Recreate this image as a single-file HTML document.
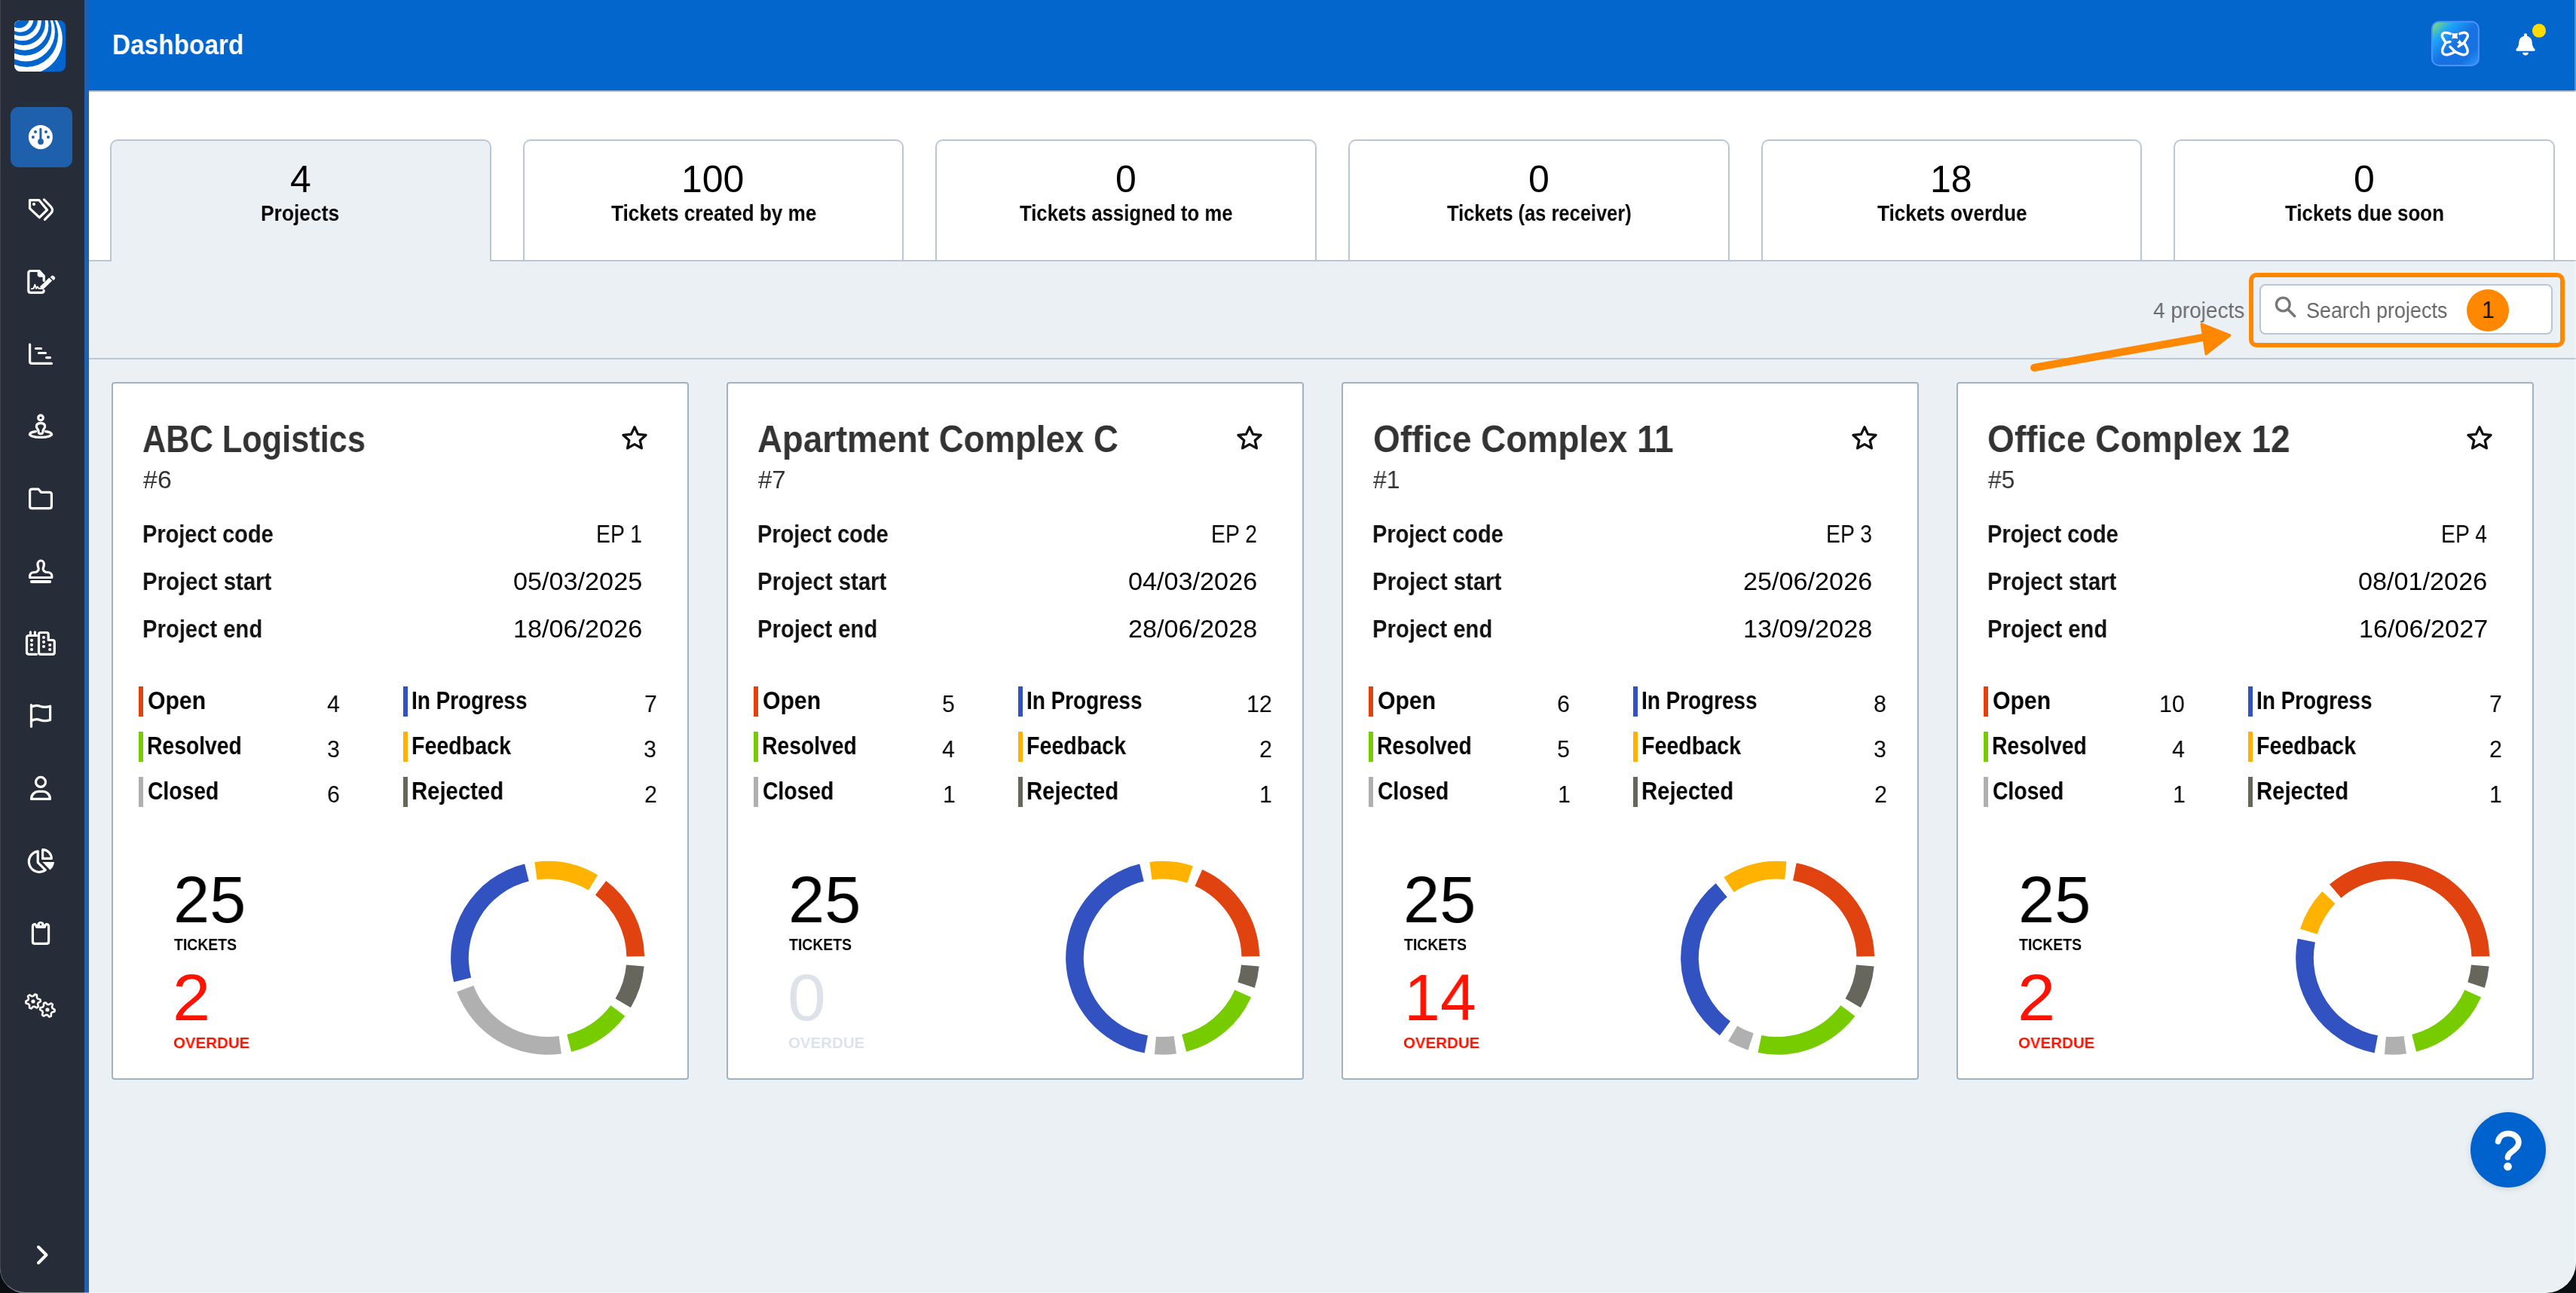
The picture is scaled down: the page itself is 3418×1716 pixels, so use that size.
<!DOCTYPE html><html><head><meta charset="utf-8"><style>
html,body{margin:0;padding:0}
body{width:3418px;height:1716px;background:#0c0f11;position:relative;overflow:hidden;font-family:"Liberation Sans",sans-serif}
#win{position:absolute;left:0;top:0;width:3418px;height:1716px;border-radius:0 0 40px 33px;overflow:hidden;background:#ebf0f5}
.abs{position:absolute}
.t{position:absolute;line-height:0;white-space:nowrap;transform-origin:0 0;font-family:"Liberation Sans",sans-serif;will-change:transform}
</style></head><body><div id="win"><div class="abs" style="left:0;top:0;width:112px;height:1716px;background:#262c38"></div><div class="abs" style="left:112px;top:0;width:6px;height:1716px;background:#1f60b0"></div><svg class="abs" style="left:19px;top:27px" width="68" height="68" viewBox="0 0 68 68"><defs><clipPath id="lc"><rect width="68" height="68" rx="8"/></clipPath></defs>
<g clip-path="url(#lc)"><rect width="68" height="68" fill="#0264cd"/><ellipse cx="17.2" cy="24.9" rx="46.6" ry="46.6" fill="#fff"/><ellipse cx="16.3" cy="19.5" rx="41.8" ry="42.6" fill="#0264cd"/><ellipse cx="15.4" cy="15.0" rx="38.5" ry="39.4" fill="#fff"/><ellipse cx="14.3" cy="11.0" rx="35.2" ry="35.8" fill="#0264cd"/><ellipse cx="13.3" cy="7.5" rx="32.0" ry="32.3" fill="#fff"/><ellipse cx="12.2" cy="4.0" rx="28.8" ry="28.9" fill="#0264cd"/><ellipse cx="10.6" cy="1.5" rx="25.2" ry="25.6" fill="#fff"/><ellipse cx="9.2" cy="-1.0" rx="21.8" ry="21.8" fill="#0264cd"/><ellipse cx="7.6" cy="-3.0" rx="18.0" ry="18.8" fill="#fff"/><ellipse cx="6.3" cy="-5.0" rx="14.2" ry="15.3" fill="#0264cd"/></g></svg><div class="abs" style="left:14px;top:142px;width:82px;height:80px;border-radius:10px;background:#1f60ad"></div><svg class="abs" style="left:30px;top:150px" width="50" height="60" viewBox="0 0 50 60"><circle cx="23.9" cy="31.9" r="16" fill="#fff"/>
<path d="M23.9 21.2V36.5" stroke="#1f60ad" stroke-width="3" stroke-linecap="round"/><circle cx="24" cy="38" r="3.9" fill="#1f60ad"/>
<circle cx="17" cy="25" r="2" fill="#1f60ad"/><circle cx="31" cy="25" r="2" fill="#1f60ad"/><circle cx="13.9" cy="32" r="2" fill="#1f60ad"/><circle cx="34" cy="32" r="2" fill="#1f60ad"/></svg><svg style="position:absolute;left:30px;top:250px" width="50" height="50" viewBox="0 0 50 50" fill="none" stroke="#fff" stroke-width="3.2" stroke-linecap="round" stroke-linejoin="round"><path d="M9.5 15.6H21.8L32.5 28.6L22.3 38.7L9.5 26.6Z"/><circle cx="15" cy="21" r="2.1" fill="#fff" stroke="none"/><path d="M28.4 14.9L37.3 24Q39.6 26.6 39.6 28.8Q39.6 31 37.3 33.3L29.4 41.3"/></svg><svg style="position:absolute;left:30px;top:348px" width="50" height="50" viewBox="0 0 50 50" fill="none" stroke="#fff" stroke-width="3.2" stroke-linecap="round" stroke-linejoin="round"><path d="M28.2 24.5V19M20.5 11.5H10.8Q7.8 11.5 7.8 14.5V37.4Q7.8 40.4 10.8 40.4H25.2Q28.2 40.4 28.2 37.6"/><path d="M19.7 9.9H22.8L29.8 17.4V19.7H21.7L19.7 17.8Z" fill="#fff" stroke="none"/><path d="M24.9 34.6L37.2 22.4" stroke-width="5.6" stroke-linecap="butt"/><path d="M23.6 36.2L24.3 33.2L26.6 35.5Z" fill="#fff" stroke="none"/><path d="M37.4 19.6L38.4 18.6Q39.9 17.4 41.3 18.8L42 19.5Q43.4 20.9 42.2 22.4L41.2 23.4Z" fill="#fff" stroke="#fff" stroke-width="1"/><path d="M11.8 35.3L14.6 34.6L16.3 29.8L18 34.8L19.8 32.6L21.3 34.8H24" stroke-width="1.9"/></svg><svg style="position:absolute;left:30px;top:445px" width="50" height="50" viewBox="0 0 50 50" fill="none" stroke="#fff" stroke-width="3.2" stroke-linecap="round" stroke-linejoin="round"><path d="M9.6 12.2V34.4Q9.6 37.4 12.6 37.4H38.4"/><path d="M17.5 17.5H24.5M21.5 23.5H30.5M31.6 29.6H36.5"/></svg><svg style="position:absolute;left:30px;top:540px" width="50" height="50" viewBox="0 0 50 50" fill="none" stroke="#fff" stroke-width="3.2" stroke-linecap="round" stroke-linejoin="round"><circle cx="24" cy="14.5" r="3.3"/><path d="M24 21.7C28 21.7 29.6 23.6 29.6 26C29.6 28.4 28.2 29.4 27.3 30.6L26.7 34C26.4 35.3 25.4 35.6 24 35.6C22.6 35.6 21.6 35.3 21.3 34L20.7 30.6C19.8 29.4 18.4 28.4 18.4 26C18.4 23.6 20 21.7 24 21.7Z"/><path d="M17.4 32.7A14.5 4.1 0 1 0 30.6 32.7"/></svg><svg style="position:absolute;left:30px;top:636px" width="50" height="50" viewBox="0 0 50 50" fill="none" stroke="#fff" stroke-width="3.2" stroke-linecap="round" stroke-linejoin="round"><path d="M12.5 13.2H21L24.7 17.4H35.5Q38.4 17.4 38.4 20.3V35.7Q38.4 38.6 35.5 38.6H12.5Q9.6 38.6 9.6 35.7V16.1Q9.6 13.2 12.5 13.2Z"/></svg><svg style="position:absolute;left:30px;top:732px" width="50" height="50" viewBox="0 0 50 50" fill="none" stroke="#fff" stroke-width="3.2" stroke-linecap="round" stroke-linejoin="round"><path d="M9.6 34.5V32.5C9.6 29.5 12 27.5 15 27.5H16.5C19 27.5 21.5 25 21.2 22.5C20.8 20.5 20 19.5 20 17C20 14.2 21.9 12 24.2 12C26.5 12 28.4 14.2 28.4 17C28.4 19.5 27.6 20.5 27.2 22.5C26.9 25 29.4 27.5 32 27.5H33.4C36.4 27.5 38.8 29.5 38.8 32.5V34.5Z"/><path d="M11.8 40H36.2" stroke-width="3.8"/></svg><svg style="position:absolute;left:30px;top:828px" width="50" height="50" viewBox="0 0 50 50" fill="none" stroke="#fff" stroke-width="3.2" stroke-linecap="round" stroke-linejoin="round"><path d="M18.5 40.3H8.2Q5.5 40.3 5.5 37.6V18.2Q5.5 15.5 8.2 15.5H18.5"/><path d="M10.4 10.8V15.5M16.4 10.8V15.5"/><path d="M21.5 37.7V14Q21.5 11.5 24 11.5H31.7Q34.2 11.5 34.2 14V21.5H39.7Q42.3 21.5 42.3 24V37.7Q42.3 40.3 39.7 40.3H24Q21.5 40.3 21.5 37.7Z"/><circle cx="12" cy="21.8" r="2.1" fill="#fff" stroke="none"/><circle cx="12" cy="27.8" r="2.1" fill="#fff" stroke="none"/><circle cx="12" cy="34" r="2.1" fill="#fff" stroke="none"/><circle cx="28" cy="18" r="2.1" fill="#fff" stroke="none"/><circle cx="28" cy="24" r="2.1" fill="#fff" stroke="none"/><circle cx="28" cy="30" r="2.1" fill="#fff" stroke="none"/><circle cx="36.2" cy="28" r="2.1" fill="#fff" stroke="none"/><circle cx="36.2" cy="34" r="2.1" fill="#fff" stroke="none"/></svg><svg style="position:absolute;left:30px;top:924px" width="50" height="50" viewBox="0 0 50 50" fill="none" stroke="#fff" stroke-width="3.2" stroke-linecap="round" stroke-linejoin="round"><path d="M11.5 11.5V40.3"/><path d="M11.5 14.2C16 12 19.5 11.8 23 13.2C27 14.8 31 15 36.6 13.2V31.5C31 33.3 27 33.1 23 31.5C19.5 30.1 16 30.3 11.5 32.5"/></svg><svg style="position:absolute;left:30px;top:1020px" width="50" height="50" viewBox="0 0 50 50" fill="none" stroke="#fff" stroke-width="3.2" stroke-linecap="round" stroke-linejoin="round"><circle cx="24" cy="17.9" r="6.5"/><path d="M11.6 40.4C11.6 34 16.5 30.4 21 30.4H27C31.5 30.4 36.4 34 36.4 40.4Z"/></svg><svg style="position:absolute;left:30px;top:1116px" width="50" height="50" viewBox="0 0 50 50" fill="none" stroke="#fff" stroke-width="3.2" stroke-linecap="round" stroke-linejoin="round"><path d="M20.2 13.8V28.6L30.3 38.6A13.8 13.8 0 1 1 20.2 13.8Z"/><path d="M26.6 11.7V23.4H38.3A11.7 11.7 0 0 0 26.6 11.7Z"/><path d="M26.3 28H42A15.6 15.6 0 0 1 36.4 38.6Z" fill="#fff" stroke="none"/></svg><svg style="position:absolute;left:30px;top:1212px" width="50" height="50" viewBox="0 0 50 50" fill="none" stroke="#fff" stroke-width="3.2" stroke-linecap="round" stroke-linejoin="round"><path d="M16.8 14.7H16.4Q13.4 14.7 13.4 17.7V37.4Q13.4 40.4 16.4 40.4H31.6Q34.6 40.4 34.6 37.4V17.7Q34.6 14.7 31.6 14.7H31.2"/><path d="M16.6 14.8V17Q16.6 19.9 19.5 19.9H28.4Q31.3 19.9 31.3 17V14.8H28.6A4.7 4.7 0 0 0 19.4 14.8Z" fill="#fff" stroke="none"/><rect x="22.9" y="13.8" width="2.2" height="2.2" fill="#262c38" stroke="none" transform="rotate(45 24 14.9)"/></svg><svg style="position:absolute;left:28px;top:1306px" width="56" height="56" viewBox="0 0 56 56" fill="none" stroke="#fff" stroke-width="3.2" stroke-linecap="round" stroke-linejoin="round"><path d="M25.47 20.48 L25.80 23.02 L22.76 24.82 L22.06 26.51 L22.92 29.94 L20.88 31.50 L17.80 29.76 L15.99 30.00 L13.45 32.46 L11.08 31.48 L11.04 27.94 L9.93 26.49 L6.53 25.52 L6.20 22.98 L9.24 21.18 L9.94 19.49 L9.08 16.06 L11.12 14.50 L14.20 16.24 L16.01 16.00 L18.55 13.54 L20.92 14.52 L20.96 18.06 L22.07 19.51Z" stroke-width="2.6"/><circle cx="16" cy="23" r="2.6" fill="#fff" stroke="none"/><path d="M44.70 34.00 L44.37 36.54 L40.96 37.50 L39.85 38.95 L39.80 42.49 L37.44 43.47 L34.90 41.00 L33.09 40.76 L30.00 42.49 L27.97 40.93 L28.84 37.50 L28.14 35.81 L25.10 34.00 L25.43 31.46 L28.84 30.50 L29.95 29.05 L30.00 25.51 L32.36 24.53 L34.90 27.00 L36.71 27.24 L39.80 25.51 L41.83 27.07 L40.96 30.50 L41.66 32.19Z" stroke-width="2.6"/><circle cx="34.9" cy="34" r="2.6" fill="#fff" stroke="none"/></svg><svg class="abs" style="left:40px;top:1645px" width="40" height="40" viewBox="0 0 40 40"><path d="M11 10L21.5 20.5L11 31" fill="none" stroke="#fff" stroke-width="4" stroke-linecap="round" stroke-linejoin="round"/></svg><div class="abs" style="left:118px;top:0;width:3300px;height:120px;background:#0266cd"></div><div class="abs" style="left:118px;top:120px;width:3300px;height:2px;background:#b1bec9"></div><div class="t" style="left:148.9px;top:60.0px;font-size:37px;font-weight:700;color:#fff;transform:scaleX(0.9021);">Dashboard</div><svg class="abs" style="left:3222px;top:24px" width="72" height="68" viewBox="0 0 72 68"><defs>
<linearGradient id="ag" x1="0" y1="0" x2="1" y2="1"><stop offset="0" stop-color="#8fe860"/><stop offset="0.25" stop-color="#1ca4fb"/><stop offset="0.5" stop-color="#1872e2"/><stop offset="0.78" stop-color="#1672e0"/><stop offset="1" stop-color="#2e9dff"/></linearGradient></defs>
<rect x="4.9" y="4.7" width="62" height="58.2" rx="9.5" fill="url(#ag)" stroke="#4d90ff" stroke-width="2"/>
<g fill="none" stroke="#fff" stroke-width="3.4" stroke-linecap="round" stroke-linejoin="round"><path d="M29.20 20.70C28.63 20.53 27.05 19.92 25.80 19.70C24.55 19.48 22.83 19.17 21.70 19.40C20.57 19.63 19.57 20.35 19.00 21.10C18.43 21.85 18.15 22.87 18.30 23.90C18.45 24.93 19.07 25.85 19.90 27.30C20.73 28.75 22.73 31.72 23.30 32.60"/><path d="M23.30 32.60C22.83 33.42 21.28 35.85 20.50 37.50C19.72 39.15 18.75 40.95 18.60 42.50C18.45 44.05 18.72 45.77 19.60 46.80C20.48 47.83 22.25 48.60 23.90 48.70C25.55 48.80 27.53 48.07 29.50 47.40C31.47 46.73 34.67 45.15 35.70 44.70"/><path d="M35.70 44.70C36.73 45.15 39.95 46.73 41.90 47.40C43.85 48.07 45.80 48.80 47.40 48.70C49.00 48.60 50.72 47.83 51.50 46.80C52.28 45.77 52.32 44.05 52.10 42.50C51.88 40.95 50.98 39.10 50.20 37.50C49.42 35.90 47.87 33.67 47.40 32.90"/><path d="M47.40 32.90C47.97 31.97 49.97 28.80 50.80 27.30C51.63 25.80 52.28 24.98 52.40 23.90C52.52 22.82 52.23 21.57 51.50 20.80C50.77 20.03 49.08 19.48 48.00 19.30C46.92 19.12 46.02 19.47 45.00 19.70C43.98 19.93 42.42 20.53 41.90 20.70"/><path d="M35.70 44.70L28.90 38.00"/><path d="M47.40 32.90L40.00 37.60"/><path d="M23.30 32.60L29.00 31.40"/></g><path d="M35.20 18.00Q36.88 21.92 40.80 23.60Q36.88 25.28 35.20 29.20Q33.52 25.28 29.60 23.60Q33.52 21.92 35.20 18.00Z" fill="#fff" transform="rotate(45 35.2 23.6)"/><path d="M41.60 28.60Q42.61 31.19 45.20 32.20Q42.61 33.21 41.60 35.80Q40.59 33.21 38.00 32.20Q40.59 31.19 41.60 28.60Z" fill="#fff"/></svg><svg class="abs" style="left:3330px;top:26px" width="56" height="56" viewBox="0 0 56 56">
<path d="M21 18.2C22.2 18.2 23 19.1 23 20.2V21.7C27 22.7 29.6 26 29.8 30.5C30 34.5 30.8 36.5 33.2 39C34.2 40 33.6 41.8 32.2 41.8H9.8C8.4 41.8 7.8 40 8.8 39C11.2 36.5 12 34.5 12.2 30.5C12.4 26 15 22.7 19 21.7V20.2C19 19.1 19.8 18.2 21 18.2Z" fill="#fff"/>
<path d="M17.1 43.7H24.9C24.9 45.8 23.2 47.4 21 47.4C18.8 47.4 17.1 45.8 17.1 43.7Z" fill="#fff"/>
<circle cx="39" cy="14.7" r="9.1" fill="#ffdb00"/></svg><div class="abs" style="left:118px;top:122px;width:3300px;height:225px;background:#fff"></div><div class="abs" style="left:118px;top:345px;width:3300px;height:2px;background:#b9c6d3"></div><div class="abs" style="left:146.00px;top:185px;width:501.67px;height:160px;border:2px solid #b9c6d3;border-bottom:none;border-radius:10px 10px 0 0;background:#ebf0f5"></div><div class="t" style="left:384.8px;top:237.5px;font-size:50px;font-weight:400;color:#000;transform:scaleX(1.0000);">4</div><div class="t" style="left:346.1px;top:282.5px;font-size:30px;font-weight:700;color:#000;transform:scaleX(0.8793);">Projects</div><div class="abs" style="left:693.67px;top:185px;width:501.67px;height:158px;border:2px solid #b9c6d3;border-bottom:none;border-radius:10px 10px 0 0;background:#fff"></div><div class="t" style="left:903.5px;top:237.5px;font-size:50px;font-weight:400;color:#000;transform:scaleX(1.0000);">100</div><div class="t" style="left:810.8px;top:282.5px;font-size:30px;font-weight:700;color:#000;transform:scaleX(0.8702);">Tickets created by me</div><div class="abs" style="left:1241.34px;top:185px;width:501.67px;height:158px;border:2px solid #b9c6d3;border-bottom:none;border-radius:10px 10px 0 0;background:#fff"></div><div class="t" style="left:1480.2px;top:237.5px;font-size:50px;font-weight:400;color:#000;transform:scaleX(1.0000);">0</div><div class="t" style="left:1353.2px;top:282.5px;font-size:30px;font-weight:700;color:#000;transform:scaleX(0.8571);">Tickets assigned to me</div><div class="abs" style="left:1789.01px;top:185px;width:501.67px;height:158px;border:2px solid #b9c6d3;border-bottom:none;border-radius:10px 10px 0 0;background:#fff"></div><div class="t" style="left:2027.8px;top:237.5px;font-size:50px;font-weight:400;color:#000;transform:scaleX(1.0000);">0</div><div class="t" style="left:1919.9px;top:282.5px;font-size:30px;font-weight:700;color:#000;transform:scaleX(0.8498);">Tickets (as receiver)</div><div class="abs" style="left:2336.68px;top:185px;width:501.67px;height:158px;border:2px solid #b9c6d3;border-bottom:none;border-radius:10px 10px 0 0;background:#fff"></div><div class="t" style="left:2560.5px;top:237.5px;font-size:50px;font-weight:400;color:#000;transform:scaleX(1.0000);">18</div><div class="t" style="left:2490.7px;top:282.5px;font-size:30px;font-weight:700;color:#000;transform:scaleX(0.8709);">Tickets overdue</div><div class="abs" style="left:2884.35px;top:185px;width:501.67px;height:158px;border:2px solid #b9c6d3;border-bottom:none;border-radius:10px 10px 0 0;background:#fff"></div><div class="t" style="left:3123.2px;top:237.5px;font-size:50px;font-weight:400;color:#000;transform:scaleX(1.0000);">0</div><div class="t" style="left:3032.4px;top:282.5px;font-size:30px;font-weight:700;color:#000;transform:scaleX(0.8626);">Tickets due soon</div><div class="abs" style="left:118px;top:475px;width:3300px;height:2px;background:#b9c6d3"></div><div class="t" style="left:2856.5px;top:411.9px;font-size:29px;font-weight:400;color:#6b6b6b;transform:scaleX(0.9640);">4 projects</div><div class="abs" style="left:2998px;top:377px;width:385px;height:63px;border:2px solid #b9c6d3;border-radius:8px;background:#fff"></div><svg class="abs" style="left:3010px;top:386px" width="44" height="44" viewBox="0 0 44 44"><circle cx="19.3" cy="18" r="8.9" fill="none" stroke="#777" stroke-width="3.4"/><path d="M25.8 24.5L34.6 33.4" stroke="#777" stroke-width="3.6" stroke-linecap="round"/></svg><div class="t" style="left:3060.1px;top:411.9px;font-size:29px;font-weight:400;color:#666;transform:scaleX(0.9300);">Search projects</div><div class="abs" style="left:3273px;top:384px;width:56px;height:56px;border-radius:50%;background:#ff8800"></div><div class="t" style="left:3292.9px;top:410.8px;font-size:32px;font-weight:400;color:#111;transform:scaleX(0.9500);">1</div><div class="abs" style="left:2984px;top:362px;width:407px;height:87px;border:6px solid #ff8800;border-radius:10px"></div><svg class="abs" style="left:2680px;top:420px" width="300" height="90" viewBox="0 0 300 90"><path d="M19 68L248 27" stroke="#ff8800" stroke-width="10" stroke-linecap="round"/><path d="M241 10L279 25L247 50Z" fill="#ff8800" stroke="#ff8800" stroke-width="3" stroke-linejoin="round"/></svg><div class="abs" style="left:148px;top:507px;width:762px;height:922px;border:2px solid #a0b3c3;border-radius:4px;background:#fff"></div><div class="t" style="left:189.1px;top:582.5px;font-size:50px;font-weight:700;color:#333;transform:scaleX(0.8658);">ABC Logistics</div><div class="t" style="left:190.0px;top:636.5px;font-size:33px;font-weight:400;color:#333;transform:scaleX(1.0286);">#6</div><svg class="abs" style="left:820px;top:560px" width="44" height="42" viewBox="0 0 44 42"><path transform="translate(22 20.8) scale(1.06) translate(-22 -20.8)" d="M22 7.5L26.3 16.6L36.2 17.6L28.8 24.3L30.9 34.1L22 29.1L13.1 34.1L15.2 24.3L7.8 17.6L17.7 16.6Z" fill="none" stroke="#111" stroke-width="3.1" stroke-linejoin="round"/></svg><div class="t" style="left:189.3px;top:708.1px;font-size:34px;font-weight:700;color:#111;transform:scaleX(0.8507);">Project code</div><div class="t" style="left:790.5px;top:708.1px;font-size:34px;font-weight:400;color:#000;transform:scaleX(0.8330);">EP 1</div><div class="t" style="left:189.3px;top:771.1px;font-size:34px;font-weight:700;color:#111;transform:scaleX(0.8638);">Project start</div><div class="t" style="left:680.5px;top:771.1px;font-size:34px;font-weight:400;color:#000;transform:scaleX(1.0060);">05/03/2025</div><div class="t" style="left:189.3px;top:834.1px;font-size:34px;font-weight:700;color:#111;transform:scaleX(0.8597);">Project end</div><div class="t" style="left:680.5px;top:834.1px;font-size:34px;font-weight:400;color:#000;transform:scaleX(1.0060);">18/06/2026</div><div class="abs" style="left:184px;top:911px;width:6px;height:40px;background:#e0430f"></div><div class="t" style="left:196.1px;top:929.5px;font-size:33px;font-weight:700;color:#000;transform:scaleX(0.9136);">Open</div><div class="t" style="left:433.9px;top:933.8px;font-size:32px;font-weight:400;color:#000;transform:scaleX(0.9500);">4</div><div class="abs" style="left:535px;top:911px;width:6px;height:40px;background:#3352c1"></div><div class="t" style="left:546.3px;top:929.5px;font-size:33px;font-weight:700;color:#000;transform:scaleX(0.8455);">In Progress</div><div class="t" style="left:855.3px;top:933.8px;font-size:32px;font-weight:400;color:#000;transform:scaleX(0.9500);">7</div><div class="abs" style="left:184px;top:971px;width:6px;height:40px;background:#77cc00"></div><div class="t" style="left:195.3px;top:989.5px;font-size:33px;font-weight:700;color:#000;transform:scaleX(0.8573);">Resolved</div><div class="t" style="left:433.9px;top:993.8px;font-size:32px;font-weight:400;color:#000;transform:scaleX(0.9500);">3</div><div class="abs" style="left:535px;top:971px;width:6px;height:40px;background:#ffb300"></div><div class="t" style="left:546.3px;top:989.5px;font-size:33px;font-weight:700;color:#000;transform:scaleX(0.8667);">Feedback</div><div class="t" style="left:854.3px;top:993.8px;font-size:32px;font-weight:400;color:#000;transform:scaleX(0.9500);">3</div><div class="abs" style="left:184px;top:1031px;width:6px;height:40px;background:#b0b0b0"></div><div class="t" style="left:196.1px;top:1049.5px;font-size:33px;font-weight:700;color:#000;transform:scaleX(0.8570);">Closed</div><div class="t" style="left:433.9px;top:1053.8px;font-size:32px;font-weight:400;color:#000;transform:scaleX(0.9500);">6</div><div class="abs" style="left:535px;top:1031px;width:6px;height:40px;background:#66665c"></div><div class="t" style="left:546.2px;top:1049.5px;font-size:33px;font-weight:700;color:#000;transform:scaleX(0.8872);">Rejected</div><div class="t" style="left:855.3px;top:1053.8px;font-size:32px;font-weight:400;color:#000;transform:scaleX(0.9500);">2</div><div class="t" style="left:230.1px;top:1194.2px;font-size:88px;font-weight:400;color:#000;transform:scaleX(0.9833);">25</div><div class="t" style="left:230.6px;top:1254.0px;font-size:22px;font-weight:700;color:#000;transform:scaleX(0.8817);">TICKETS</div><div class="t" style="left:228.9px;top:1324.0px;font-size:88px;font-weight:400;color:#ff1300;transform:scaleX(1.0244);">2</div><div class="t" style="left:229.6px;top:1384.2px;font-size:21px;font-weight:700;color:#ff1300;transform:scaleX(0.9755);">OVERDUE</div><svg class="abs" style="left:588px;top:1133px" width="280" height="280" viewBox="0 0 280 280"><path d="M266.61 149.50A128.5 128.5 0 0 1 248.84 204.33L228.51 192.15A104.8 104.8 0 0 0 243.00 147.43Z" fill="#66665c"/><path d="M241.33 215.49A128.5 128.5 0 0 1 170.12 262.87L164.31 239.90A104.8 104.8 0 0 0 222.38 201.25Z" fill="#77cc00"/><path d="M156.93 265.49A128.5 128.5 0 0 1 18.19 183.18L40.40 174.90A104.8 104.8 0 0 0 153.55 242.03Z" fill="#b0b0b0"/><path d="M14.16 170.34A128.5 128.5 0 0 1 108.12 13.47L113.74 36.49A104.8 104.8 0 0 0 37.11 164.43Z" fill="#3352c1"/><path d="M121.34 10.96A128.5 128.5 0 0 1 205.09 28.34L192.83 48.62A104.8 104.8 0 0 0 124.52 34.45Z" fill="#ffb300"/><path d="M216.22 35.89A128.5 128.5 0 0 1 267.08 136.06L243.38 136.47A104.8 104.8 0 0 0 201.90 54.78Z" fill="#e0430f"/></svg><div class="abs" style="left:964px;top:507px;width:762px;height:922px;border:2px solid #a0b3c3;border-radius:4px;background:#fff"></div><div class="t" style="left:1005.1px;top:582.5px;font-size:50px;font-weight:700;color:#333;transform:scaleX(0.9120);">Apartment Complex C</div><div class="t" style="left:1006.0px;top:636.5px;font-size:33px;font-weight:400;color:#333;transform:scaleX(1.0000);">#7</div><svg class="abs" style="left:1636px;top:560px" width="44" height="42" viewBox="0 0 44 42"><path transform="translate(22 20.8) scale(1.06) translate(-22 -20.8)" d="M22 7.5L26.3 16.6L36.2 17.6L28.8 24.3L30.9 34.1L22 29.1L13.1 34.1L15.2 24.3L7.8 17.6L17.7 16.6Z" fill="none" stroke="#111" stroke-width="3.1" stroke-linejoin="round"/></svg><div class="t" style="left:1005.3px;top:708.1px;font-size:34px;font-weight:700;color:#111;transform:scaleX(0.8507);">Project code</div><div class="t" style="left:1607.4px;top:708.1px;font-size:34px;font-weight:400;color:#000;transform:scaleX(0.8330);">EP 2</div><div class="t" style="left:1005.3px;top:771.1px;font-size:34px;font-weight:700;color:#111;transform:scaleX(0.8638);">Project start</div><div class="t" style="left:1496.5px;top:771.1px;font-size:34px;font-weight:400;color:#000;transform:scaleX(1.0060);">04/03/2026</div><div class="t" style="left:1005.3px;top:834.1px;font-size:34px;font-weight:700;color:#111;transform:scaleX(0.8597);">Project end</div><div class="t" style="left:1496.5px;top:834.1px;font-size:34px;font-weight:400;color:#000;transform:scaleX(1.0060);">28/06/2028</div><div class="abs" style="left:1000px;top:911px;width:6px;height:40px;background:#e0430f"></div><div class="t" style="left:1012.1px;top:929.5px;font-size:33px;font-weight:700;color:#000;transform:scaleX(0.9136);">Open</div><div class="t" style="left:1249.8px;top:933.8px;font-size:32px;font-weight:400;color:#000;transform:scaleX(0.9500);">5</div><div class="abs" style="left:1351px;top:911px;width:6px;height:40px;background:#3352c1"></div><div class="t" style="left:1362.3px;top:929.5px;font-size:33px;font-weight:700;color:#000;transform:scaleX(0.8455);">In Progress</div><div class="t" style="left:1654.2px;top:933.8px;font-size:32px;font-weight:400;color:#000;transform:scaleX(0.9500);">12</div><div class="abs" style="left:1000px;top:971px;width:6px;height:40px;background:#77cc00"></div><div class="t" style="left:1011.3px;top:989.5px;font-size:33px;font-weight:700;color:#000;transform:scaleX(0.8573);">Resolved</div><div class="t" style="left:1249.8px;top:993.8px;font-size:32px;font-weight:400;color:#000;transform:scaleX(0.9500);">4</div><div class="abs" style="left:1351px;top:971px;width:6px;height:40px;background:#ffb300"></div><div class="t" style="left:1362.3px;top:989.5px;font-size:33px;font-weight:700;color:#000;transform:scaleX(0.8667);">Feedback</div><div class="t" style="left:1671.3px;top:993.8px;font-size:32px;font-weight:400;color:#000;transform:scaleX(0.9500);">2</div><div class="abs" style="left:1000px;top:1031px;width:6px;height:40px;background:#b0b0b0"></div><div class="t" style="left:1012.1px;top:1049.5px;font-size:33px;font-weight:700;color:#000;transform:scaleX(0.8570);">Closed</div><div class="t" style="left:1250.8px;top:1053.8px;font-size:32px;font-weight:400;color:#000;transform:scaleX(0.9500);">1</div><div class="abs" style="left:1351px;top:1031px;width:6px;height:40px;background:#66665c"></div><div class="t" style="left:1362.2px;top:1049.5px;font-size:33px;font-weight:700;color:#000;transform:scaleX(0.8872);">Rejected</div><div class="t" style="left:1671.3px;top:1053.8px;font-size:32px;font-weight:400;color:#000;transform:scaleX(0.9500);">1</div><div class="t" style="left:1046.1px;top:1194.2px;font-size:88px;font-weight:400;color:#000;transform:scaleX(0.9833);">25</div><div class="t" style="left:1046.6px;top:1254.0px;font-size:22px;font-weight:700;color:#000;transform:scaleX(0.8817);">TICKETS</div><div class="t" style="left:1044.9px;top:1324.0px;font-size:88px;font-weight:400;color:#dde2e8;transform:scaleX(1.0395);">0</div><div class="t" style="left:1045.6px;top:1384.2px;font-size:21px;font-weight:700;color:#dde2e8;transform:scaleX(0.9755);">OVERDUE</div><svg class="abs" style="left:1404px;top:1133px" width="280" height="280" viewBox="0 0 280 280"><path d="M266.61 149.50A128.5 128.5 0 0 1 260.84 177.92L238.29 170.62A104.8 104.8 0 0 0 243.00 147.43Z" fill="#66665c"/><path d="M256.03 190.48A128.5 128.5 0 0 1 170.12 262.87L164.31 239.90A104.8 104.8 0 0 0 234.37 180.86Z" fill="#77cc00"/><path d="M156.93 265.49A128.5 128.5 0 0 1 127.94 266.36L129.90 242.74A104.8 104.8 0 0 0 153.55 242.03Z" fill="#b0b0b0"/><path d="M114.61 264.54A128.5 128.5 0 0 1 108.12 13.47L113.74 36.49A104.8 104.8 0 0 0 119.03 241.26Z" fill="#3352c1"/><path d="M121.34 10.96A128.5 128.5 0 0 1 178.74 16.23L171.33 38.74A104.8 104.8 0 0 0 124.52 34.45Z" fill="#ffb300"/><path d="M191.28 21.09A128.5 128.5 0 0 1 267.08 136.06L243.38 136.47A104.8 104.8 0 0 0 181.56 42.71Z" fill="#e0430f"/></svg><div class="abs" style="left:1780px;top:507px;width:762px;height:922px;border:2px solid #a0b3c3;border-radius:4px;background:#fff"></div><div class="t" style="left:1821.6px;top:582.5px;font-size:50px;font-weight:700;color:#333;transform:scaleX(0.9195);">Office Complex 11</div><div class="t" style="left:1822.0px;top:636.5px;font-size:33px;font-weight:400;color:#333;transform:scaleX(0.9714);">#1</div><svg class="abs" style="left:2452px;top:560px" width="44" height="42" viewBox="0 0 44 42"><path transform="translate(22 20.8) scale(1.06) translate(-22 -20.8)" d="M22 7.5L26.3 16.6L36.2 17.6L28.8 24.3L30.9 34.1L22 29.1L13.1 34.1L15.2 24.3L7.8 17.6L17.7 16.6Z" fill="none" stroke="#111" stroke-width="3.1" stroke-linejoin="round"/></svg><div class="t" style="left:1821.3px;top:708.1px;font-size:34px;font-weight:700;color:#111;transform:scaleX(0.8507);">Project code</div><div class="t" style="left:2422.5px;top:708.1px;font-size:34px;font-weight:400;color:#000;transform:scaleX(0.8330);">EP 3</div><div class="t" style="left:1821.3px;top:771.1px;font-size:34px;font-weight:700;color:#111;transform:scaleX(0.8638);">Project start</div><div class="t" style="left:2312.5px;top:771.1px;font-size:34px;font-weight:400;color:#000;transform:scaleX(1.0060);">25/06/2026</div><div class="t" style="left:1821.3px;top:834.1px;font-size:34px;font-weight:700;color:#111;transform:scaleX(0.8597);">Project end</div><div class="t" style="left:2312.5px;top:834.1px;font-size:34px;font-weight:400;color:#000;transform:scaleX(1.0060);">13/09/2028</div><div class="abs" style="left:1816px;top:911px;width:6px;height:40px;background:#e0430f"></div><div class="t" style="left:1828.1px;top:929.5px;font-size:33px;font-weight:700;color:#000;transform:scaleX(0.9136);">Open</div><div class="t" style="left:2065.9px;top:933.8px;font-size:32px;font-weight:400;color:#000;transform:scaleX(0.9500);">6</div><div class="abs" style="left:2167px;top:911px;width:6px;height:40px;background:#3352c1"></div><div class="t" style="left:2178.3px;top:929.5px;font-size:33px;font-weight:700;color:#000;transform:scaleX(0.8455);">In Progress</div><div class="t" style="left:2486.4px;top:933.8px;font-size:32px;font-weight:400;color:#000;transform:scaleX(0.9500);">8</div><div class="abs" style="left:1816px;top:971px;width:6px;height:40px;background:#77cc00"></div><div class="t" style="left:1827.3px;top:989.5px;font-size:33px;font-weight:700;color:#000;transform:scaleX(0.8573);">Resolved</div><div class="t" style="left:2065.9px;top:993.8px;font-size:32px;font-weight:400;color:#000;transform:scaleX(0.9500);">5</div><div class="abs" style="left:2167px;top:971px;width:6px;height:40px;background:#ffb300"></div><div class="t" style="left:2178.3px;top:989.5px;font-size:33px;font-weight:700;color:#000;transform:scaleX(0.8667);">Feedback</div><div class="t" style="left:2486.4px;top:993.8px;font-size:32px;font-weight:400;color:#000;transform:scaleX(0.9500);">3</div><div class="abs" style="left:1816px;top:1031px;width:6px;height:40px;background:#b0b0b0"></div><div class="t" style="left:1828.1px;top:1049.5px;font-size:33px;font-weight:700;color:#000;transform:scaleX(0.8570);">Closed</div><div class="t" style="left:2066.8px;top:1053.8px;font-size:32px;font-weight:400;color:#000;transform:scaleX(0.9500);">1</div><div class="abs" style="left:2167px;top:1031px;width:6px;height:40px;background:#66665c"></div><div class="t" style="left:2178.2px;top:1049.5px;font-size:33px;font-weight:700;color:#000;transform:scaleX(0.8872);">Rejected</div><div class="t" style="left:2487.3px;top:1053.8px;font-size:32px;font-weight:400;color:#000;transform:scaleX(0.9500);">2</div><div class="t" style="left:1862.1px;top:1194.2px;font-size:88px;font-weight:400;color:#000;transform:scaleX(0.9833);">25</div><div class="t" style="left:1862.6px;top:1254.0px;font-size:22px;font-weight:700;color:#000;transform:scaleX(0.8817);">TICKETS</div><div class="t" style="left:1863.1px;top:1324.0px;font-size:88px;font-weight:400;color:#ff1300;transform:scaleX(0.9778);">14</div><div class="t" style="left:1861.6px;top:1384.2px;font-size:21px;font-weight:700;color:#ff1300;transform:scaleX(0.9755);">OVERDUE</div><svg class="abs" style="left:2220px;top:1133px" width="280" height="280" viewBox="0 0 280 280"><path d="M266.61 149.50A128.5 128.5 0 0 1 248.84 204.33L228.51 192.15A104.8 104.8 0 0 0 243.00 147.43Z" fill="#66665c"/><path d="M241.33 215.49A128.5 128.5 0 0 1 112.50 264.12L117.31 240.92A104.8 104.8 0 0 0 222.38 201.25Z" fill="#77cc00"/><path d="M99.49 260.70A128.5 128.5 0 0 1 73.03 248.81L85.13 228.43A104.8 104.8 0 0 0 106.70 238.13Z" fill="#b0b0b0"/><path d="M61.84 241.35A128.5 128.5 0 0 1 56.62 39.35L71.74 57.60A104.8 104.8 0 0 0 76.00 222.35Z" fill="#3352c1"/><path d="M67.41 31.32A128.5 128.5 0 0 1 150.34 10.34L148.17 33.94A104.8 104.8 0 0 0 80.54 51.05Z" fill="#ffb300"/><path d="M163.65 12.26A128.5 128.5 0 0 1 267.08 136.06L243.38 136.47A104.8 104.8 0 0 0 159.03 35.51Z" fill="#e0430f"/></svg><div class="abs" style="left:2596px;top:507px;width:762px;height:922px;border:2px solid #a0b3c3;border-radius:4px;background:#fff"></div><div class="t" style="left:2637.4px;top:582.5px;font-size:50px;font-weight:700;color:#333;transform:scaleX(0.9204);">Office Complex 12</div><div class="t" style="left:2638.0px;top:636.5px;font-size:33px;font-weight:400;color:#333;transform:scaleX(0.9657);">#5</div><svg class="abs" style="left:3268px;top:560px" width="44" height="42" viewBox="0 0 44 42"><path transform="translate(22 20.8) scale(1.06) translate(-22 -20.8)" d="M22 7.5L26.3 16.6L36.2 17.6L28.8 24.3L30.9 34.1L22 29.1L13.1 34.1L15.2 24.3L7.8 17.6L17.7 16.6Z" fill="none" stroke="#111" stroke-width="3.1" stroke-linejoin="round"/></svg><div class="t" style="left:2637.3px;top:708.1px;font-size:34px;font-weight:700;color:#111;transform:scaleX(0.8507);">Project code</div><div class="t" style="left:3238.5px;top:708.1px;font-size:34px;font-weight:400;color:#000;transform:scaleX(0.8330);">EP 4</div><div class="t" style="left:2637.3px;top:771.1px;font-size:34px;font-weight:700;color:#111;transform:scaleX(0.8638);">Project start</div><div class="t" style="left:3128.5px;top:771.1px;font-size:34px;font-weight:400;color:#000;transform:scaleX(1.0060);">08/01/2026</div><div class="t" style="left:2637.3px;top:834.1px;font-size:34px;font-weight:700;color:#111;transform:scaleX(0.8597);">Project end</div><div class="t" style="left:3129.5px;top:834.1px;font-size:34px;font-weight:400;color:#000;transform:scaleX(1.0060);">16/06/2027</div><div class="abs" style="left:2632px;top:911px;width:6px;height:40px;background:#e0430f"></div><div class="t" style="left:2644.1px;top:929.5px;font-size:33px;font-weight:700;color:#000;transform:scaleX(0.9136);">Open</div><div class="t" style="left:2864.8px;top:933.8px;font-size:32px;font-weight:400;color:#000;transform:scaleX(0.9500);">10</div><div class="abs" style="left:2983px;top:911px;width:6px;height:40px;background:#3352c1"></div><div class="t" style="left:2994.3px;top:929.5px;font-size:33px;font-weight:700;color:#000;transform:scaleX(0.8455);">In Progress</div><div class="t" style="left:3303.3px;top:933.8px;font-size:32px;font-weight:400;color:#000;transform:scaleX(0.9500);">7</div><div class="abs" style="left:2632px;top:971px;width:6px;height:40px;background:#77cc00"></div><div class="t" style="left:2643.3px;top:989.5px;font-size:33px;font-weight:700;color:#000;transform:scaleX(0.8573);">Resolved</div><div class="t" style="left:2881.8px;top:993.8px;font-size:32px;font-weight:400;color:#000;transform:scaleX(0.9500);">4</div><div class="abs" style="left:2983px;top:971px;width:6px;height:40px;background:#ffb300"></div><div class="t" style="left:2994.3px;top:989.5px;font-size:33px;font-weight:700;color:#000;transform:scaleX(0.8667);">Feedback</div><div class="t" style="left:3303.3px;top:993.8px;font-size:32px;font-weight:400;color:#000;transform:scaleX(0.9500);">2</div><div class="abs" style="left:2632px;top:1031px;width:6px;height:40px;background:#b0b0b0"></div><div class="t" style="left:2644.1px;top:1049.5px;font-size:33px;font-weight:700;color:#000;transform:scaleX(0.8570);">Closed</div><div class="t" style="left:2882.8px;top:1053.8px;font-size:32px;font-weight:400;color:#000;transform:scaleX(0.9500);">1</div><div class="abs" style="left:2983px;top:1031px;width:6px;height:40px;background:#66665c"></div><div class="t" style="left:2994.2px;top:1049.5px;font-size:33px;font-weight:700;color:#000;transform:scaleX(0.8872);">Rejected</div><div class="t" style="left:3303.3px;top:1053.8px;font-size:32px;font-weight:400;color:#000;transform:scaleX(0.9500);">1</div><div class="t" style="left:2678.1px;top:1194.2px;font-size:88px;font-weight:400;color:#000;transform:scaleX(0.9833);">25</div><div class="t" style="left:2678.6px;top:1254.0px;font-size:22px;font-weight:700;color:#000;transform:scaleX(0.8817);">TICKETS</div><div class="t" style="left:2676.9px;top:1324.0px;font-size:88px;font-weight:400;color:#ff1300;transform:scaleX(1.0244);">2</div><div class="t" style="left:2677.6px;top:1384.2px;font-size:21px;font-weight:700;color:#ff1300;transform:scaleX(0.9755);">OVERDUE</div><svg class="abs" style="left:3036px;top:1133px" width="280" height="280" viewBox="0 0 280 280"><path d="M266.61 149.50A128.5 128.5 0 0 1 260.84 177.92L238.29 170.62A104.8 104.8 0 0 0 243.00 147.43Z" fill="#66665c"/><path d="M256.03 190.48A128.5 128.5 0 0 1 170.12 262.87L164.31 239.90A104.8 104.8 0 0 0 234.37 180.86Z" fill="#77cc00"/><path d="M156.93 265.49A128.5 128.5 0 0 1 127.94 266.36L129.90 242.74A104.8 104.8 0 0 0 153.55 242.03Z" fill="#b0b0b0"/><path d="M114.61 264.54A128.5 128.5 0 0 1 12.67 112.73L35.90 117.44A104.8 104.8 0 0 0 119.03 241.26Z" fill="#3352c1"/><path d="M16.03 99.70A128.5 128.5 0 0 1 45.24 50.01L62.45 66.29A104.8 104.8 0 0 0 38.64 106.82Z" fill="#ffb300"/><path d="M54.98 40.73A128.5 128.5 0 0 1 267.08 136.06L243.38 136.47A104.8 104.8 0 0 0 70.40 58.73Z" fill="#e0430f"/></svg><div class="abs" style="left:3278px;top:1476px;width:100px;height:100px;border-radius:50%;background:#0062cc;box-shadow:0 2px 10px rgba(0,0,0,0.12)"></div><svg class="abs" style="left:3300px;top:1490px" width="60" height="72" viewBox="0 0 60 72"><path d="M14.6 24.8C15.8 18.5 21.3 14.4 28 14.4C35.8 14.4 41.9 19.4 41.9 26C41.9 30.2 39.8 32.8 36.5 35.6C31.5 39.8 27.4 42.2 27.4 46" fill="none" stroke="#fff" stroke-width="7.6" stroke-linecap="round"/><circle cx="27.5" cy="58.2" r="5.4" fill="#fff"/></svg><div class="abs" style="left:3416px;top:0;width:2px;height:1716px;background:rgba(255,255,255,0.3)"></div><div class="abs" style="left:0;top:0;width:3418px;height:1716px;box-sizing:border-box;border-radius:0 0 40px 33px;border-bottom:1.5px solid rgba(255,255,255,0.45);border-left:1px solid rgba(255,255,255,0.12)"></div></div></body></html>
